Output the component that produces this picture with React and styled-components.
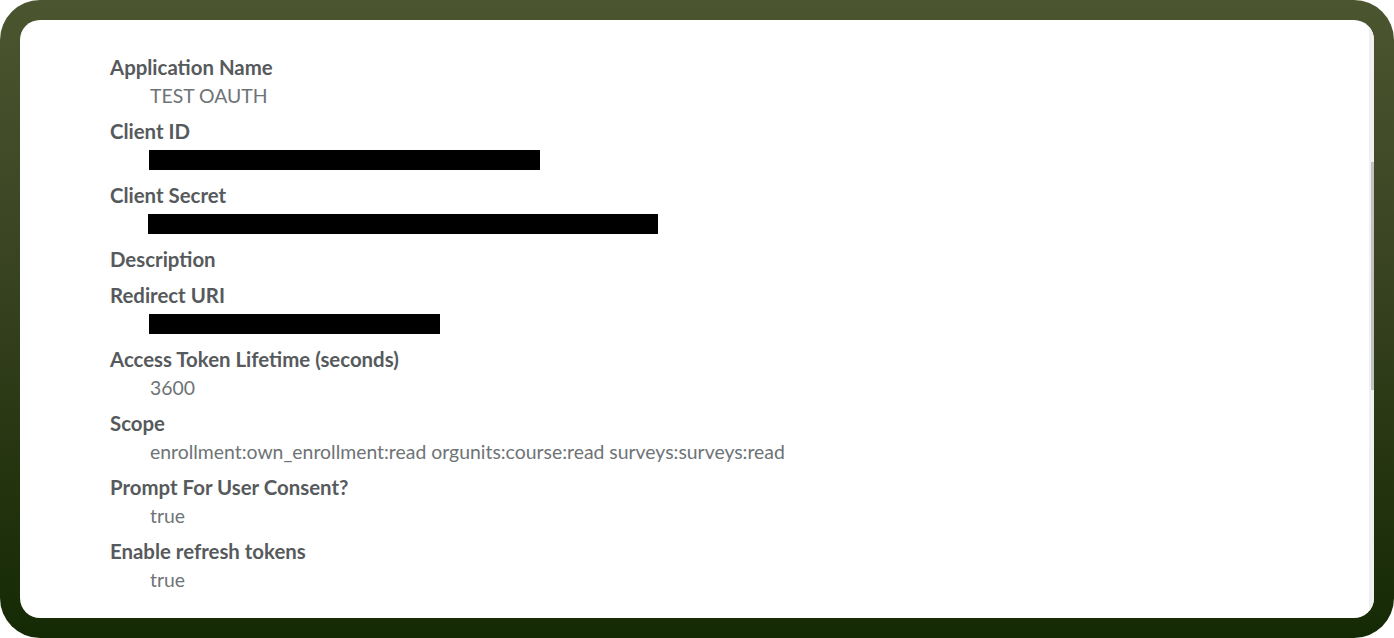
import React from 'react';
import styled, { createGlobalStyle } from 'styled-components';

const GlobalStyle = createGlobalStyle`
	html, body {
		margin: 0;
		padding: 0;
		background: #ffffff;
	}
	* {
		box-sizing: border-box;
	}
`;

const fields = [
	{ label: 'Application Name', value: 'TEST OAUTH' },
	{ label: 'Client ID', redacted: 391 },
	{ label: 'Client Secret', redacted: 510, shift: -1 },
	{ label: 'Description' },
	{ label: 'Redirect URI', redacted: 291 },
	{ label: 'Access Token Lifetime (seconds)', value: '3600' },
	{ label: 'Scope', value: 'enrollment:own_enrollment:read orgunits:course:read surveys:surveys:read' },
	{ label: 'Prompt For User Consent?', value: 'true' },
	{ label: 'Enable refresh tokens', value: 'true' },
];

export default function App() {
	return (
		<>
			<GlobalStyle />
			<Frame>
				<Card>
					<Content>
						{fields.map((f) => (
							<Field key={f.label}>
								<Label>{f.label}</Label>
								{f.value && <Value>{f.value}</Value>}
								{f.redacted && (
									<Value>
										<Redacted $width={f.redacted} $shift={f.shift || 0} />
									</Value>
								)}
							</Field>
						))}
					</Content>
					<Track>
						<Thumb />
					</Track>
				</Card>
			</Frame>
		</>
	);
}

const Frame = styled.div`
	width: 1394px;
	height: 638px;
	padding: 20px;
	border-radius: 40px;
	background: linear-gradient(180deg, #4b552f 0%, #3a4423 40%, #24340f 75%, #142a05 100%);
`;

const Card = styled.div`
	display: flex;
	height: 100%;
	background: #ffffff;
	border-radius: 20px;
	overflow: hidden;
`;

const Content = styled.div`
	flex: 1;
	padding: 32px 0 0 90px;
	display: flex;
	flex-direction: column;
	gap: 6px;
	font-family: Lato, 'Open Sans', sans-serif;
`;

const Field = styled.div`
	display: flex;
	flex-direction: column;
`;

const Label = styled.div`
	font-size: 20.4px;
	font-weight: 700;
	line-height: 30px;
	color: #565a5c;
`;

const Value = styled.div`
	display: flex;
	align-items: center;
	height: 28px;
	padding-left: 40px;
	font-size: 19.4px;
	line-height: 28px;
	color: #6e7376;
`;

const Redacted = styled.span`
	display: block;
	width: ${(p) => p.$width}px;
	height: 20px;
	margin-left: ${(p) => -1 + p.$shift}px;
	background: #000000;
`;

const Track = styled.div`
	width: 5px;
	height: 100%;
	background: #f0f0f0;
	padding-top: 142px;
	padding-left: 2px;
`;

const Thumb = styled.div`
	width: 3px;
	height: 228px;
	background: #c1c1c1;
`;
